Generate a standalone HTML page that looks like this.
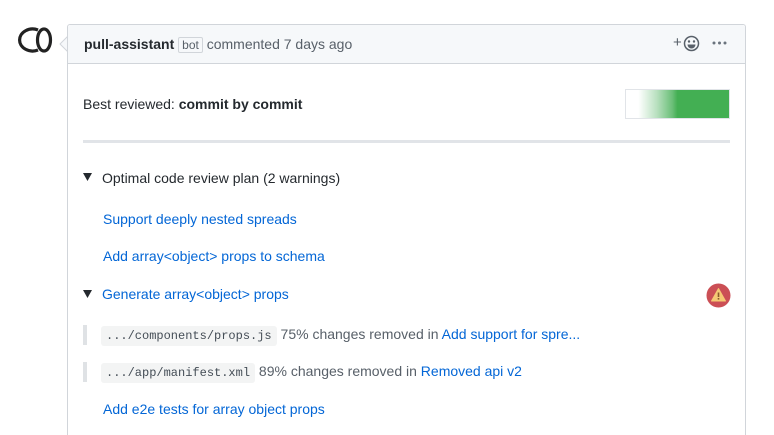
<!DOCTYPE html>
<html><head><style>
html,body{margin:0;width:774px;height:435px;overflow:hidden}
body{background:#fff;font-family:"Liberation Sans",sans-serif;font-size:14px;color:#24292e;position:relative}
.a{position:absolute}
a{color:#0366d6;text-decoration:none}
.box{left:67px;top:24px;width:677px;height:420px;border:1px solid #d1d5da;border-bottom:none;border-radius:3px;background:#fff}
.hdr{left:0;top:0;right:0;height:38px;background:#f6f8fa;border-bottom:1px solid #d1d5da;border-radius:3px 3px 0 0}
.code{font-family:"Liberation Mono",monospace;font-size:12px;background:#f3f4f4;padding:3px 5px;border-radius:3px;color:#444d56}
.q{width:4px;height:20px;background:#dfe2e5}
</style></head><body>
<div class="a" style="left:0;top:0;width:774px;height:435px;overflow:hidden">
<svg class="a" style="left:0;top:20px" width="60" height="40" viewBox="0 20 60 40">
<path d="M38 30 A13 11 0 1 0 38 50" fill="none" stroke="#222" stroke-width="3.2"/>
<ellipse cx="44" cy="40" rx="6.5" ry="11" fill="none" stroke="#222" stroke-width="3.2"/>
</svg>
<svg class="a" style="left:59px;top:36px" width="10" height="16"><path d="M9 0 L1 8 L9 16" fill="#f6f8fa" stroke="#d1d5da"/></svg>
<div class="a box">
<div class="a hdr">
<div class="a" style="left:16px;top:11px;white-space:nowrap;color:#586069"><b style="color:#24292e">pull-assistant</b> <span style="border:1px solid #d1d5da;border-radius:2px;font-size:12px;padding:0 3px;color:#586069">bot</span> commented 7 days ago</div>
<div class="a" style="left:605px;top:9px;color:#586069;font-size:15px">+</div>
<svg class="a" style="left:615px;top:10px" width="17" height="17" viewBox="0 0 17 17"><circle cx="8.5" cy="8.5" r="7" fill="none" stroke="#586069" stroke-width="1.5"/><circle cx="6" cy="6.5" r="1.2" fill="#586069"/><circle cx="11" cy="6.5" r="1.2" fill="#586069"/><path d="M4.5 9.5 H12.5 A4 4 0 0 1 4.5 9.5Z" fill="#586069"/></svg>
<svg class="a" style="left:644px;top:16px" width="16" height="5"><circle cx="2" cy="2" r="1.5" fill="#6a737d"/><circle cx="7.5" cy="2" r="1.5" fill="#6a737d"/><circle cx="13" cy="2" r="1.5" fill="#6a737d"/></svg>
</div>
</div>
<div class="a" style="left:83px;top:96px">Best reviewed: <b>commit by commit</b></div>
<div class="a" style="left:625px;top:89px;width:103px;height:28px;border:1px solid #e1e4e8;background:linear-gradient(90deg,#fff 0%,#fff 12%,#b8e0bf 30%,#6bbf78 45%,#43af53 50%,#43af53 100%)"></div>
<div class="a" style="left:83px;top:140px;width:647px;height:3px;background:#e1e4e8"></div>
<svg class="a" style="left:83px;top:173px" width="9" height="8"><path d="M0 0 H9 L4.5 8Z" fill="#24292e"/></svg>
<div class="a" style="left:102px;top:170px">Optimal code review plan (2 warnings)</div>
<a class="a" style="left:103px;top:211px">Support deeply nested spreads</a>
<a class="a" style="left:103px;top:248px">Add array&lt;object&gt; props to schema</a>
<svg class="a" style="left:83px;top:290px" width="9" height="8"><path d="M0 0 H9 L4.5 8Z" fill="#24292e"/></svg>
<a class="a" style="left:102px;top:286px">Generate array&lt;object&gt; props</a>
<svg class="a" style="left:706px;top:283px" width="25" height="25" viewBox="0 0 25 25"><circle cx="12.5" cy="12.5" r="12" fill="#cb4f55"/><path d="M12.5 5.5 L19.5 18 H5.5Z" fill="#f5c874" stroke="#f5c874" stroke-linejoin="round"/><rect x="11.7" y="9.5" width="1.6" height="4.5" fill="#8a5a2b"/><rect x="11.7" y="15" width="1.6" height="1.6" fill="#8a5a2b"/></svg>
<div class="a q" style="left:83px;top:325px"></div>
<div class="a" style="left:101px;top:326px;white-space:nowrap;color:#586069"><span class="code">.../components/props.js</span> 75% changes removed in <a>Add support for spre...</a></div>
<div class="a q" style="left:83px;top:362px"></div>
<div class="a" style="left:101px;top:363px;white-space:nowrap;color:#586069"><span class="code">.../app/manifest.xml</span> 89% changes removed in <a>Removed api v2</a></div>
<a class="a" style="left:103px;top:401px">Add e2e tests for array object props</a>
</div>
</body></html>
